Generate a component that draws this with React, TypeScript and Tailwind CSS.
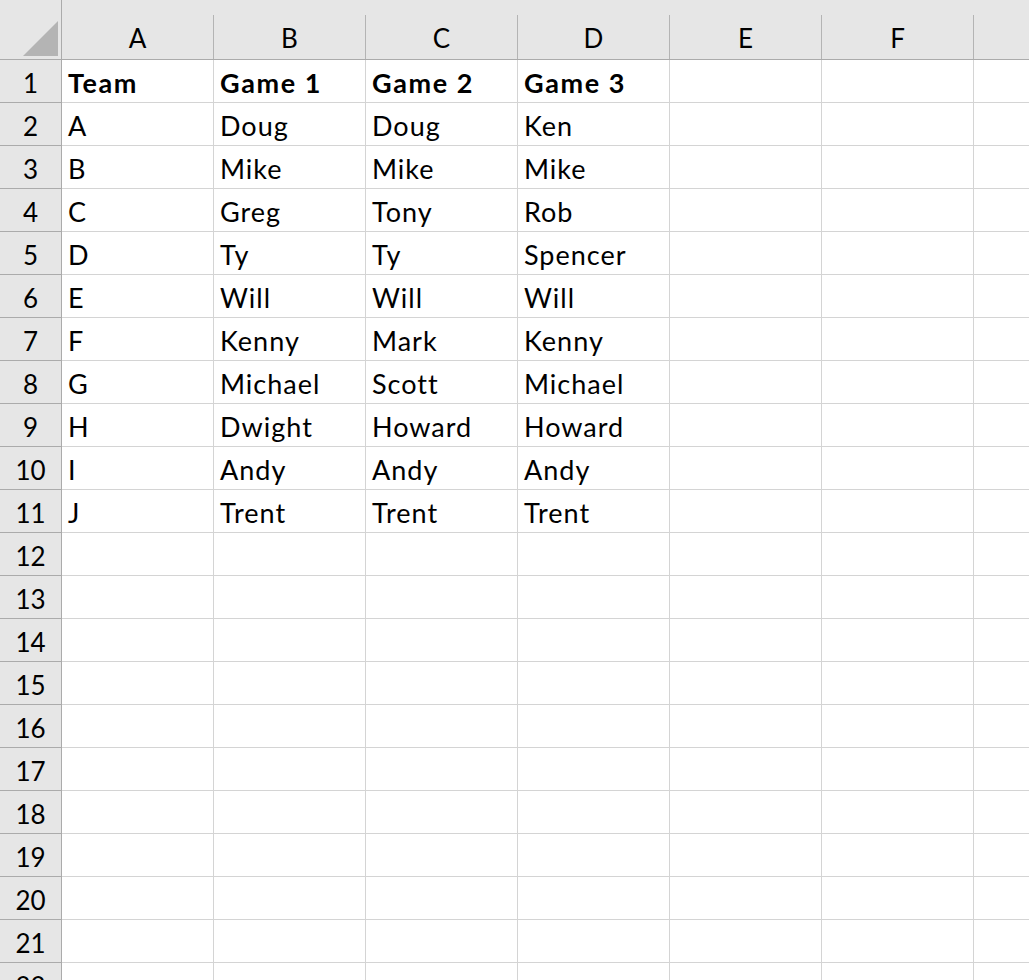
import React from 'react';

const columns = ['A', 'B', 'C', 'D', 'E', 'F', 'G'];

const data: string[][] = [
  ['Team', 'Game 1', 'Game 2', 'Game 3'],
  ['A', 'Doug', 'Doug', 'Ken'],
  ['B', 'Mike', 'Mike', 'Mike'],
  ['C', 'Greg', 'Tony', 'Rob'],
  ['D', 'Ty', 'Ty', 'Spencer'],
  ['E', 'Will', 'Will', 'Will'],
  ['F', 'Kenny', 'Mark', 'Kenny'],
  ['G', 'Michael', 'Scott', 'Michael'],
  ['H', 'Dwight', 'Howard', 'Howard'],
  ['I', 'Andy', 'Andy', 'Andy'],
  ['J', 'Trent', 'Trent', 'Trent'],
];

const ROW_COUNT = 22;

export default function App() {
  return (
    <div className="h-[980px] w-full overflow-hidden bg-white font-['Lato','Liberation_Sans',sans-serif] text-black">
      {/* Column headers */}
      <div className="flex h-[60px] bg-[#e6e6e6] border-b border-[#ababab]">
        <div className="relative w-[62px] shrink-0 border-r border-[#ababab]">
          {/* select-all triangle */}
          <svg className="absolute left-[23px] top-[21px]" width="35" height="35" viewBox="0 0 35 35">
            <polygon points="35,0 35,35 0,35" fill="#b4b4b4" />
          </svg>
        </div>
        {columns.map(col => (
          <div key={col} className="flex w-[152px] shrink-0 flex-col">
            <div className="h-[15px]" />
            <div className="flex flex-1 items-center justify-center border-r border-[#b4b4b4] pt-[2px] text-[26px] leading-none">
              {/* G sits past the right edge of the window */}
              {col === 'G' ? '' : col}
            </div>
          </div>
        ))}
      </div>

      {/* Rows */}
      {Array.from({ length: ROW_COUNT }, (_, i) => {
        const row = data[i];
        return (
          <div key={i} className="flex h-[43px]">
            <div className="flex w-[62px] shrink-0 items-center justify-center border-r border-b border-[#ababab] bg-[#e6e6e6] pt-[3px] text-[26px] leading-none">
              {i + 1}
            </div>
            {columns.map((col, c) => (
              <div
                key={col}
                className={`flex w-[152px] shrink-0 items-end overflow-hidden whitespace-nowrap border-r border-b border-[#d4d4d4] pb-[6px] pl-[6px] text-[27px] leading-none ${
                  i === 0 ? 'font-bold tracking-[1.6px]' : 'tracking-[1px]'
                }`}
              >
                {row && row[c] ? row[c] : ''}
              </div>
            ))}
          </div>
        );
      })}
    </div>
  );
}
